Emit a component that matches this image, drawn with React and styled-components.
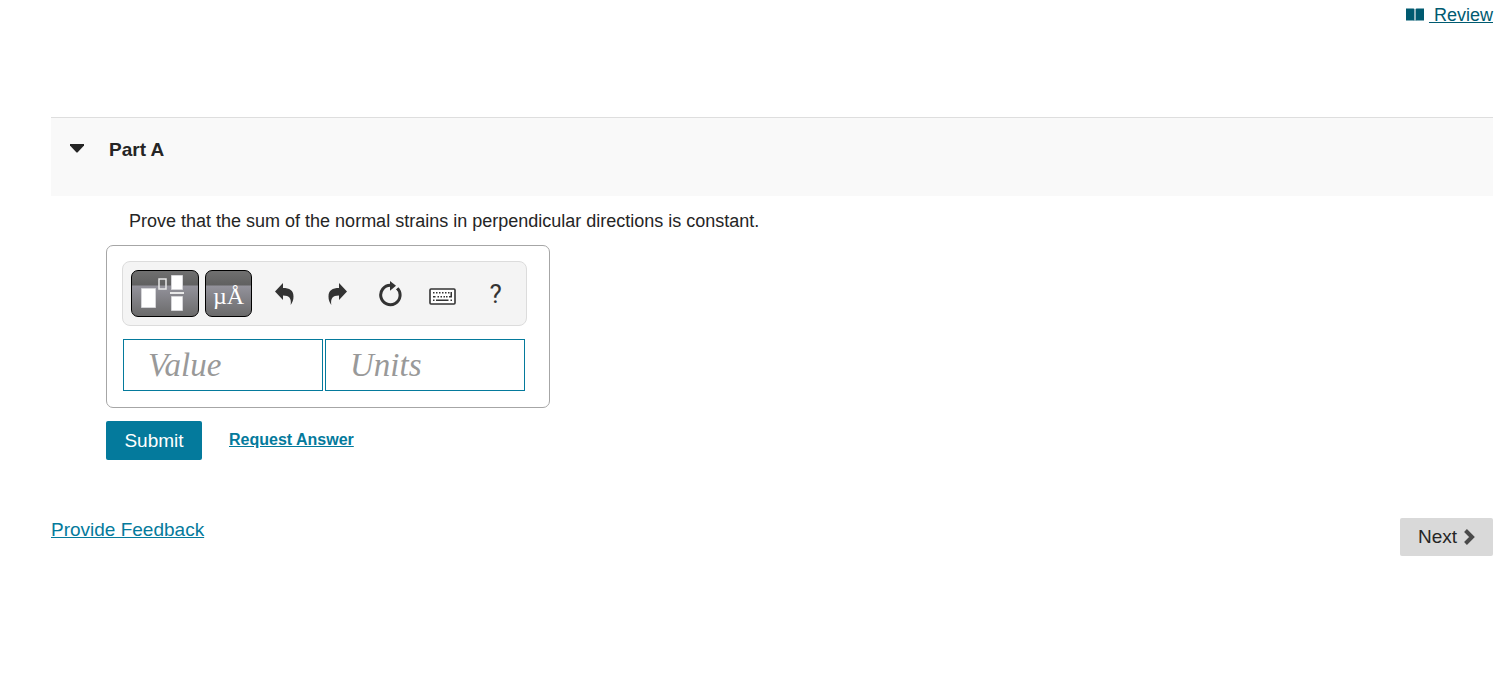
import React, { useState } from "react";
import styled, { createGlobalStyle } from "styled-components";

const App = () => {
  const [open, setOpen] = useState(true);
  const [value, setValue] = useState("");
  const [units, setUnits] = useState("");

  const togglePart = () => {
    setOpen(!open);
  };
  const clearAnswer = () => {
    setValue("");
    setUnits("");
  };
  const handleSubmit = (e) => {
    e.preventDefault();
  };

  return (
    <>
      <GlobalStyle />
      <TopBar>
        <BookIcon />
        <ReviewLink href="#review">&nbsp;Review</ReviewLink>
      </TopBar>

      <Content>
        <PartHeader>
          <ToggleBtn aria-label="Toggle Part A" aria-expanded={open} onClick={togglePart}>
            <CaretIcon />
          </ToggleBtn>
          <PartTitle>Part A</PartTitle>
        </PartHeader>

        {open && (
          <PartBody onSubmit={handleSubmit}>
            <Question>
              Prove that the sum of the normal strains in perpendicular directions is constant.
            </Question>
            <AnswerBox>
              <Toolbar>
                <TemplatesBtn type="button" aria-label="Templates">
                  <TemplatesIcon />
                </TemplatesBtn>
                <SymbolsBtn type="button" aria-label="Symbols">
                  µÅ
                </SymbolsBtn>
                <Tools>
                  <ToolBtn type="button" aria-label="Undo">
                    <UndoIcon />
                  </ToolBtn>
                  <ToolBtn type="button" aria-label="Redo">
                    <RedoIcon />
                  </ToolBtn>
                  <ToolBtn type="button" aria-label="Reset" onClick={clearAnswer}>
                    <ResetIcon />
                  </ToolBtn>
                  <ToolBtn type="button" aria-label="Keyboard shortcuts">
                    <KeyboardIcon />
                  </ToolBtn>
                  <ToolBtn type="button" aria-label="Help">
                    ?
                  </ToolBtn>
                </Tools>
              </Toolbar>
              <Fields>
                <Field
                  aria-label="Value"
                  placeholder="Value"
                  value={value}
                  onChange={(e) => setValue(e.target.value)}
                />
                <Field
                  aria-label="Units"
                  placeholder="Units"
                  value={units}
                  onChange={(e) => setUnits(e.target.value)}
                />
              </Fields>
            </AnswerBox>
            <Actions>
              <SubmitBtn type="submit">Submit</SubmitBtn>
              <RequestLink href="#answer">Request Answer</RequestLink>
            </Actions>
          </PartBody>
        )}

        <Footer>
          <Link href="#feedback">Provide Feedback</Link>
          <NextBtn>
            Next
            <ChevronIcon />
          </NextBtn>
        </Footer>
      </Content>
    </>
  );
};

const BookIcon = () => (
  <svg width="18" height="14" viewBox="0 0 18 14" aria-hidden="true">
    <path d="M0 .5h7.500l1 .5v12l-1-.5H0zM9.500 1l1-.5H18v12h-7.500l-1 .5z" fill="#005a70" />
    <path d="M8.500 1h1v12h-1z" fill="#9dbcc5" />
  </svg>
);

const CaretIcon = () => (
  <svg width="14" height="9" viewBox="0 0 14 9" aria-hidden="true">
    <path d="M0 0h14v1.500L7.500 8.500h-1L0 1.500z" fill="#252525" />
  </svg>
);

const TemplatesIcon = () => (
  <svg width="66" height="45" viewBox="0 0 66 45" aria-hidden="true">
    <g fill="#fff" stroke="#d5d5d8">
      <path d="M9.500 17.500h14v19h-14zM39.500 4.500h11v14h-11zM39.500 25.500h11v14h-11z" />
      <path d="M27 8h7v10h-7z" fill="none" stroke="#e8e8e8" strokeWidth="1.500" />
    </g>
    <path d="M38 21h14v2H38z" fill="#e8e8e8" />
  </svg>
);

const ARROW = "M1 8.500L9 0v5c6.500 0 10.500 2.300 10.500 8.500 0 3.400-1 6-2.800 8.500.9-6.500-1.200-9.500-7.700-9.500V17z";

const UndoIcon = () => (
  <svg width="20" height="22" viewBox="0 0 20 22" aria-hidden="true">
    <path d={ARROW} fill="#333" />
  </svg>
);

const RedoIcon = () => (
  <svg width="20" height="22" viewBox="0 0 20 22" aria-hidden="true">
    <path d={ARROW} fill="#333" transform="matrix(-1 0 0 1 21 0)" />
  </svg>
);

const ResetIcon = () => (
  <svg width="24" height="26" viewBox="0 0 24 26" aria-hidden="true">
    <path d="M19.300 7.200a9.700 9.700 0 1 1-6.800-2.900" fill="none" stroke="#333" strokeWidth="3" />
    <path d="M12 0l6 4.800-6 5z" fill="#333" />
    <path d="M18 8.500l3-1.500 1 4z" fill="#333" />
  </svg>
);

const KeyboardIcon = () => (
  <svg width="27" height="23" viewBox="0 -6 27 23" aria-hidden="true">
    <rect x="1" y="1" width="25" height="15" rx="1" fill="#fff" stroke="#333" strokeWidth="1.600" />
    <path
      d="M4 4h1.500v1.500H4zM7 4h1.500v1.500H7zM10 4h1.500v1.500H10zM13 4h1.500v1.500H13zM16 4h1.500v1.500H16zM19 4h1.500v1.500H19zM21.500 4H23v5.500h-3V8h1.500zM4 8h2.500v1.500H4zM8.500 8H10v1.500H8.500zM11.500 8H13v1.500h-1.500zM14.500 8H16v1.500h-1.500zM17 8h1.500v1.500H17zM4 11.500h1.500V13H4zM7 11.500h12.500V13H7zM21.500 11.500H23V13h-1.500z"
      fill="#333"
    />
  </svg>
);

const ChevronIcon = () => (
  <svg width="12" height="17" viewBox="0 0 12 17" aria-hidden="true">
    <path d="M2.500 1.500L9 8l-6.500 6.500" fill="none" stroke="#4a4a4a" strokeWidth="4" />
  </svg>
);

const GlobalStyle = createGlobalStyle`
  * {
    box-sizing: border-box;
  }
  body {
    margin: 0;
    background: white;
    color: #252525;
    font-family: "Liberation Sans", Arial, sans-serif;
    font-size: 18px;
  }
  button {
    padding: 0;
    border: none;
    font-family: inherit;
    cursor: pointer;
  }
  svg {
    display: block;
    flex: none;
  }
`;

const TopBar = styled.header`
  display: flex;
  justify-content: flex-end;
  align-items: center;
  gap: 5px;
  height: 30px;
  padding: 0 14px;
`;
const Link = styled.a`
  color: #047a9c;
  font-size: 19px;
  text-decoration: underline;
`;
const ReviewLink = styled(Link)`
  color: #005a70;
  font-size: 18px;
`;

const Content = styled.main`
  margin: 87px 14px 0 51px;
`;
const PartHeader = styled.div`
  display: flex;
  align-items: flex-start;
  gap: 18px;
  height: 79px;
  padding: 20px 12px;
  border-top: 1px solid #dedede;
  background: #f9f9f9;
`;
const ToggleBtn = styled.button`
  display: flex;
  align-items: center;
  justify-content: center;
  width: 28px;
  height: 20px;
  background: none;
`;
const PartTitle = styled.h2`
  margin: 0;
  font-size: 19px;
  line-height: 24px;
`;

const PartBody = styled.form`
  margin-left: 55px;
`;
const Question = styled.p`
  margin: 0;
  padding: 15px 23px 13px;
  line-height: 21px;
`;
const AnswerBox = styled.div`
  width: fit-content;
  padding: 15px 22px 16px 15px;
  border: 1px solid #a6a6a6;
  border-radius: 7px;
`;
const Toolbar = styled.div`
  display: flex;
  align-items: center;
  gap: 6px;
  width: 405px;
  height: 65px;
  padding: 0 4px 0 8px;
  border: 1px solid #dcdcdc;
  border-radius: 8px;
  background: #f4f4f4;
`;
const DarkBtn = styled.button`
  height: 47px;
  border: 1px solid black;
  border-radius: 7px;
  background: linear-gradient(#707070, #606060 14px, #93929b 15px, #6b6b6b);
  color: white;
`;
const TemplatesBtn = styled(DarkBtn)`
  width: 68px;
`;
const SymbolsBtn = styled(DarkBtn)`
  width: 47px;
  padding-top: 6px;
  font-family: "Liberation Serif", "Times New Roman", serif;
  font-size: 24px;
  line-height: 39px;
`;
const Tools = styled.div`
  display: flex;
  flex: 1;
`;
const ToolBtn = styled.button`
  display: flex;
  flex: 1;
  align-items: center;
  justify-content: center;
  height: 47px;
  background: none;
  color: #333;
  font-family: Roboto, sans-serif;
  font-size: 26px;
`;
const Fields = styled.div`
  display: flex;
  gap: 2px;
  margin: 13px 1px 0;
`;
const Field = styled.input`
  width: 200px;
  height: 52px;
  padding: 0 24px;
  border: 1px solid #047a9c;
  background: white;
  font-family: "Liberation Serif", "Times New Roman", serif;
  font-size: 33px;

  &::placeholder {
    color: #999;
    font-style: italic;
  }
`;

const Actions = styled.div`
  display: flex;
  align-items: flex-start;
  gap: 27px;
  margin-top: 13px;
`;
const SubmitBtn = styled.button`
  min-width: 96px;
  height: 39px;
  border-radius: 2px;
  background: #047a9c;
  color: white;
  font-size: 19px;
`;
const RequestLink = styled(Link)`
  font-size: 16px;
  font-weight: bold;
  line-height: 37px;
`;

const Footer = styled.footer`
  display: flex;
  align-items: flex-start;
  justify-content: space-between;
  margin-top: 58px;
  line-height: 24px;
`;
const NextBtn = styled.button`
  display: flex;
  align-items: center;
  gap: 6px;
  height: 38px;
  padding: 0 18px;
  border-radius: 2px;
  background: #d9d9d9;
  color: #252525;
  font-size: 19px;
`;

export default App;
